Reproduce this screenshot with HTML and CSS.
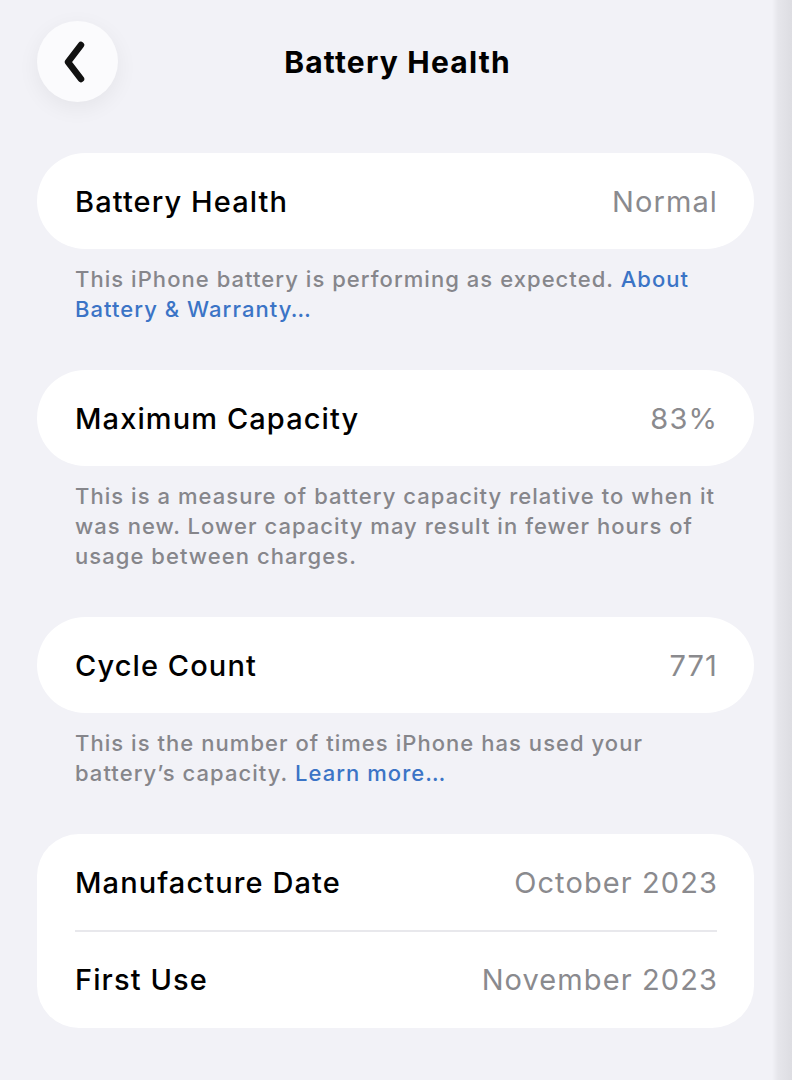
FILE: index.html
```html
<!DOCTYPE html>
<html>
<head>
<meta charset="utf-8">
<link rel="stylesheet" href="styles.css">
</head>
<body>
<div class="page">
  <header class="nav">
    <div class="back">
      <svg width="30" height="42" viewBox="0 0 30 42"><path d="M21 4 L8 21 L21 38" fill="none" stroke="#111" stroke-width="6.5" stroke-linecap="round" stroke-linejoin="round"/></svg>
    </div>
    <h1 class="title">Battery Health</h1>
  </header>

  <section class="group">
    <div class="card">
      <div class="row"><span class="label">Battery Health</span><span class="value">Normal</span></div>
    </div>
    <p class="foot">This iPhone battery is performing as expected. <span class="link">About Battery &amp; Warranty…</span></p>
  </section>

  <section class="group">
    <div class="card">
      <div class="row"><span class="label">Maximum Capacity</span><span class="value">83%</span></div>
    </div>
    <p class="foot">This is a measure of battery capacity relative to when it was new. Lower capacity may result in fewer hours of usage between charges.</p>
  </section>

  <section class="group">
    <div class="card">
      <div class="row"><span class="label">Cycle Count</span><span class="value">771</span></div>
    </div>
    <p class="foot">This is the number of times iPhone has used your battery’s capacity. <span class="link">Learn more…</span></p>
  </section>

  <section class="group">
    <div class="card card-multi">
      <div class="row"><span class="label">Manufacture Date</span><span class="value">October 2023</span></div>
      <div class="divider"></div>
      <div class="row"><span class="label">First Use</span><span class="value">November 2023</span></div>
    </div>
  </section>
</div>
</body>
</html>
```

FILE: styles.css
```css
* { box-sizing: border-box; }
html, body { margin: 0; padding: 0; }
body {
  width: 792px;
  min-height: 1080px;
  font-family: Inter, "Noto Sans", "Liberation Sans", sans-serif;
  background: linear-gradient(to right, #f2f2f7 0, #f2f2f7 772px, #e6e6eb 778px, #dddde2 792px);
  color: #000;
}
.page {
  padding: 21px 38px 0 37px;
}
.nav {
  position: relative;
  height: 81px;
  display: flex;
  align-items: center;
  justify-content: center;
  margin-bottom: 51px;
}
.back {
  position: absolute;
  left: 0;
  top: 0;
  width: 81px;
  height: 81px;
  border-radius: 50%;
  background: #fbfbfd;
  box-shadow: 0 6px 22px rgba(0,0,0,0.06);
  display: flex;
  align-items: center;
  justify-content: center;
}
.back svg { margin-left: -5px; }
.title {
  margin: 0;
  font-size: 30px;
  font-weight: 700;
  letter-spacing: 1.2px;
  padding-left: 4px;
}
.group { margin-bottom: 46px; }
.card {
  background: #fff;
  border-radius: 48px;
  padding: 0 37px 0 38px;
}
.card-multi { border-radius: 42px; }
.row {
  height: 96px;
  display: flex;
  align-items: center;
  justify-content: space-between;
}
.label {
  font-size: 29px;
  font-weight: 500;
  letter-spacing: 1.1px;
}
.value {
  font-size: 29px;
  font-weight: 400;
  color: #8a8a8e;
  letter-spacing: 1.1px;
  margin-right: -1px;
}
.divider {
  height: 1.5px;
  background: #e8e8ec;
}
.foot {
  margin: 0;
  padding: 15px 30px 0 38px;
  font-size: 22px;
  line-height: 30px;
  color: #86868b;
  font-weight: 500;
  letter-spacing: 1.05px;
}
.link { color: #3b74c6; }
```
